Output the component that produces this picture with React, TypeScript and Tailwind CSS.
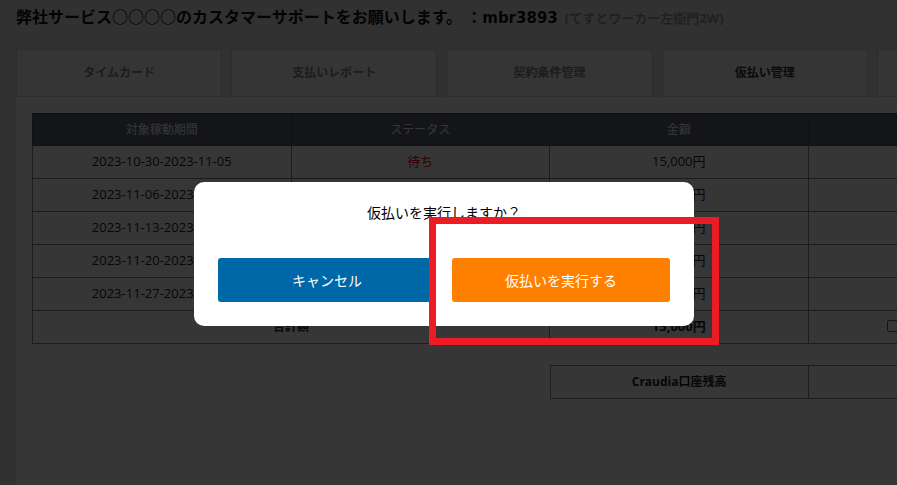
import React from "react";

const rows = [
  { period: "2023-10-30-2023-11-05", status: "待ち", amount: "15,000円" },
  { period: "2023-11-06-2023-11-12", status: "待ち", amount: "15,000円" },
  { period: "2023-11-13-2023-11-19", status: "待ち", amount: "15,000円" },
  { period: "2023-11-20-2023-11-26", status: "待ち", amount: "15,000円" },
  { period: "2023-11-27-2023-12-03", status: "待ち", amount: "15,000円" },
];

const tabs = ["タイムカード", "支払いレポート", "契約条件管理", "仮払い管理", "口座管理"];

export default function App() {
  return (
    <div
      className="relative h-[485px] w-[897px] overflow-hidden bg-[#e8e8e8] text-[#222]"
      style={{ fontFamily: "'Open Sans', 'Noto Sans CJK JP', sans-serif" }}
    >
      <div className="w-[1099px] px-4 pt-[5px]">
        <h1 className="flex items-baseline text-[16px] font-bold leading-[24px] text-[#111] whitespace-nowrap">
          <span>弊社サービス○○○○のカスタマーサポートをお願いします。 ：</span>
          <span style={{ fontFamily: "'DejaVu Sans', sans-serif" }} className="text-[15px]">mbr3893</span>
          <span className="ml-[7px] text-[13px] font-bold text-[#999]">(てすとワーカー左衛門2W)</span>
        </h1>

        <div className="mt-[19px] grid grid-cols-5 gap-[9px]">
          {tabs.map((t, i) => (
            <div
              key={t}
              className={
                "flex h-[48px] items-center justify-center border border-[#d0d0d0] bg-[#f8f8f8] text-[12px] font-bold " +
                (i === 3 ? "text-[#333]" : "text-[#888]")
              }
            >
              {t}
            </div>
          ))}
        </div>

        <div className="min-h-[400px] bg-white p-4">
          <table className="w-full table-fixed border-collapse">
            <thead>
              <tr>
                <th className="h-[32px] border border-[#4b5264] bg-[#5a6377] text-[12px] font-normal text-white">対象稼動期間</th>
                <th className="h-[32px] border border-[#4b5264] bg-[#5a6377] text-[12px] font-normal text-white">ステータス</th>
                <th className="h-[32px] border border-[#4b5264] bg-[#5a6377] text-[12px] font-normal text-white">金額</th>
                <th className="h-[32px] border border-[#4b5264] bg-[#5a6377] text-[12px] font-normal text-white">選択</th>
              </tr>
            </thead>
            <tbody>
              {rows.map((r) => (
                <tr key={r.period}>
                  <td className="h-[33px] border border-[#888] text-center text-[13px]">{r.period}</td>
                  <td className="h-[33px] border border-[#888] text-center text-[13px] text-[#e60012]">{r.status}</td>
                  <td className="h-[33px] border border-[#888] text-center text-[13px]">{r.amount}</td>
                  <td className="h-[33px] border border-[#888] text-center text-[13px]">
                    <span className="inline-block h-[11px] w-[11px] rounded-[2px] border border-[#666] align-middle" />
                  </td>
                </tr>
              ))}
              <tr>
                <td colSpan={2} className="h-[33px] border border-[#888] text-center text-[12px] font-bold">合計額</td>
                <td className="h-[33px] border border-[#888] text-center text-[13px] font-bold">15,000円</td>
                <td className="h-[33px] border border-[#888] text-center text-[12px]">
                  <span className="inline-flex items-center gap-[5px]">
                    <span className="inline-block h-[12px] w-[12px] rounded-[2px] border border-[#666]" />
                    <span>一括で選択する</span>
                  </span>
                </td>
              </tr>
            </tbody>
          </table>

          <div className="mt-[21px] flex justify-end">
            <table className="w-1/2 table-fixed border-collapse">
              <tbody>
                <tr>
                  <td className="h-[33px] border border-[#888] text-center text-[12px] font-bold">Craudia口座残高</td>
                  <td className="h-[33px] border border-[#888] text-center text-[13px] font-bold">120,000円</td>
                </tr>
              </tbody>
            </table>
          </div>
        </div>
      </div>

      {/* overlay */}
      <div className="absolute inset-0 bg-black/[0.79]" />

      {/* modal */}
      <div className="absolute left-[194px] top-[182px] w-[500px] rounded-[10px] bg-white px-6 pb-6 pt-[20px]">
        <p className="text-center text-[14px] leading-[21px] text-black">仮払いを実行しますか？</p>
        <div className="mt-[35px] flex gap-4">
          <button className="h-[44px] flex-1 rounded-[3px] bg-[#0068a7] text-[14px] text-white">キャンセル</button>
          <button className="h-[44px] flex-1 rounded-[3px] bg-[#ff8000] text-[14px] text-white">仮払いを実行する</button>
        </div>
      </div>

      {/* annotation */}
      <div className="absolute left-[429px] top-[217px] h-[128px] w-[290px] border-[7px] border-[#ed1c24]" />
    </div>
  );
}
